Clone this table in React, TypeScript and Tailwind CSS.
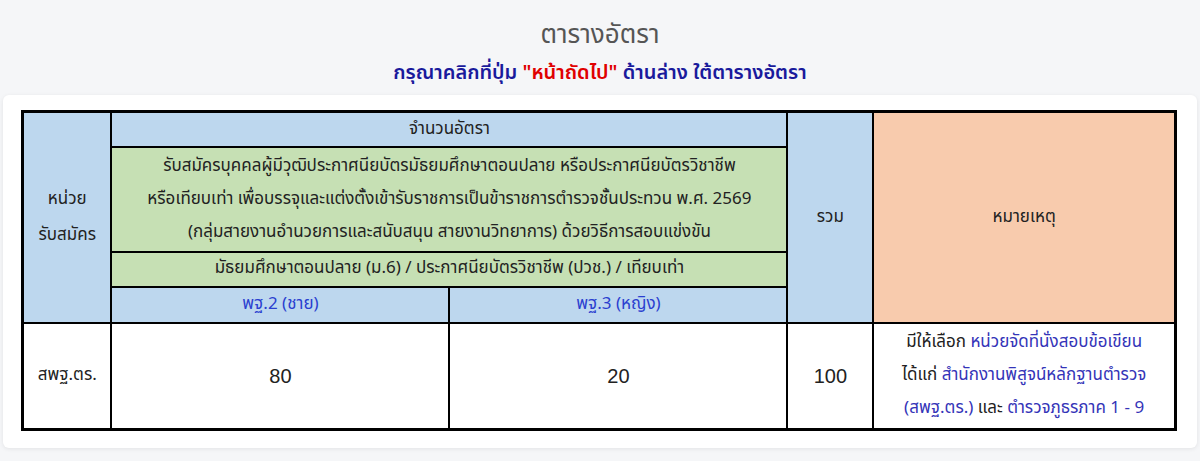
import React from "react";

const F = { fontFamily: "Tahoma, 'Noto Sans Thai', 'Noto Sans', sans-serif" };
const NUM = { fontFamily: "'Liberation Sans', Arial, sans-serif" };

export default function App() {
  const cell = "border-2 border-black text-center align-middle";
  return (
    <div className="min-h-[461px] w-[1200px] bg-[#f5f6f8] text-[#222]" style={F}>
      <div className="flex flex-col items-center pt-[17px]">
        <h1 className="text-[26px] leading-[36px] text-[#555]">ตารางอัตรา</h1>
        <p className="mt-[5px] text-[20px] leading-[30px] font-semibold text-[#1a1a9c]">
          กรุณาคลิกที่ปุ่ม <span className="text-[#e00000]">"หน้าถัดไป"</span> ด้านล่าง ใต้ตารางอัตรา
        </p>
      </div>
      <div className="mx-[3px] mt-[7px] rounded-[6px] bg-white px-[18px] pt-[15px] pb-[17px] shadow-[0_1px_4px_rgba(0,0,0,0.08)]">
        <table className="w-[1156px] border-collapse border-[3px] border-black text-[17px]">
          <colgroup>
            <col className="w-[89px]" />
            <col className="w-[339px]" />
            <col className="w-[339px]" />
            <col className="w-[86px]" />
            <col className="w-[303px]" />
          </colgroup>
          <tbody>
            <tr className="h-[35px]">
              <td rowSpan={4} className={`${cell} bg-[#bdd7ee] leading-[36px]`}>
                หน่วย
                <br />
                รับสมัคร
              </td>
              <td colSpan={2} className={`${cell} bg-[#bdd7ee]`}>
                จำนวนอัตรา
              </td>
              <td rowSpan={4} className={`${cell} bg-[#bdd7ee]`}>
                รวม
              </td>
              <td rowSpan={4} className={`${cell} bg-[#f8cbad]`}>
                หมายเหตุ
              </td>
            </tr>
            <tr className="h-[105px]">
              <td colSpan={2} className={`${cell} bg-[#c6e0b4] leading-[33px]`}>
                รับสมัครบุคคลผู้มีวุฒิประกาศนียบัตรมัธยมศึกษาตอนปลาย หรือประกาศนียบัตรวิชาชีพ
                <br />
                หรือเทียบเท่า เพื่อบรรจุและแต่งตั้งเข้ารับราชการเป็นข้าราชการตำรวจชั้นประทวน พ.ศ. 2569
                <br />
                (กลุ่มสายงานอำนวยการและสนับสนุน สายงานวิทยาการ) ด้วยวิธีการสอบแข่งขัน
              </td>
            </tr>
            <tr className="h-[35px]">
              <td colSpan={2} className={`${cell} bg-[#c6e0b4]`}>
                มัธยมศึกษาตอนปลาย (ม.6) / ประกาศนียบัตรวิชาชีพ (ปวช.) / เทียบเท่า
              </td>
            </tr>
            <tr className="h-[36px]">
              <td className={`${cell} bg-[#bdd7ee] text-[#2b3fd0]`}>พฐ.2 (ชาย)</td>
              <td className={`${cell} bg-[#bdd7ee] text-[#2b3fd0]`}>พฐ.3 (หญิง)</td>
            </tr>
            <tr className="h-[107px]">
              <td className={`${cell} bg-white`}>สพฐ.ตร.</td>
              <td className={`${cell} bg-white text-[20px]`} style={NUM}>
                80
              </td>
              <td className={`${cell} bg-white text-[20px]`} style={NUM}>
                20
              </td>
              <td className={`${cell} bg-white text-[20px]`} style={NUM}>
                100
              </td>
              <td className={`${cell} bg-white leading-[33px]`}>
                มีให้เลือก <span className="text-[#3434b8]">หน่วยจัดที่นั่งสอบข้อเขียน</span>
                <br />
                ได้แก่ <span className="text-[#3434b8]">สำนักงานพิสูจน์หลักฐานตำรวจ</span>
                <br />
                <span className="text-[#3434b8]">(สพฐ.ตร.)</span> และ{" "}
                <span className="text-[#3434b8]">ตำรวจภูธรภาค 1 - 9</span>
              </td>
            </tr>
          </tbody>
        </table>
      </div>
    </div>
  );
}
